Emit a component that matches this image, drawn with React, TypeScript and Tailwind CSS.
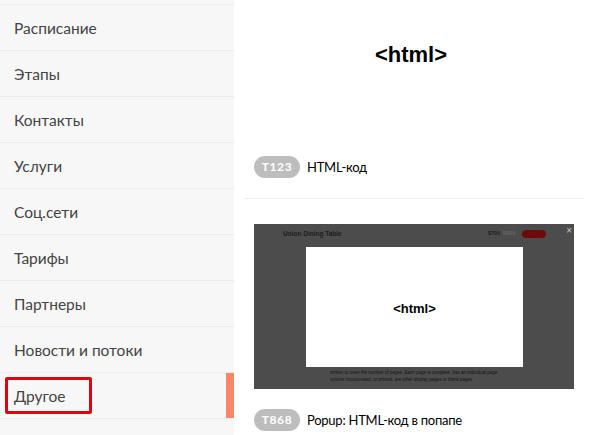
const menuItems = ['Расписание', 'Этапы', 'Контакты', 'Услуги', 'Соц.сети', 'Тарифы', 'Партнеры', 'Новости и потоки'];

function MenuRow({ label }: Readonly<{ label: string }>) {
  return (
    <div className="h-[46px] flex items-center pl-[14px] pt-[2px] border-b border-[#ececec] text-[15.5px] text-[#444444]">
      {label}
    </div>
  );
}

function TileCaption({ code, title }: Readonly<{ code: string; title: string }>) {
  return (
    <div className="flex items-center gap-[7px] h-[22px]">
      <span className="w-[46px] h-[22px] rounded-full bg-[#bdbdbd] text-white text-[12px] font-bold tracking-[0.6px] flex items-center justify-center">
        {code}
      </span>
      <span className="pt-[2px] text-[13px] tracking-[-0.25px] text-black">{title}</span>
    </div>
  );
}

function PopupPreview() {
  return (
    <div className="relative w-[320px] h-[165px] bg-[#4c4c4c] overflow-hidden" style={{ fontFamily: '"Liberation Sans", sans-serif' }}>
      <div className="flex items-center h-[23px] pb-[4px] pl-[29px] pr-[28px] text-[5.5px] font-bold text-[#1c1c1c]">
        <span className="flex-1 text-[6.5px]">Union Dining Table</span>
        <span className="w-[15px]">$700</span>
        <span className="w-[19px] text-[#666666]">$900</span>
        <span className="w-[24px] h-[8px] rounded-full bg-[#6e0a0c]" />
      </div>
      <span className="absolute top-[2px] right-[2px] text-[10px] leading-none text-[#c8c8c8]">×</span>
      <div className="ml-[52px] w-[217px] h-[120px] pt-[3px] bg-white flex items-center justify-center text-[13px] font-bold text-black">
        &lt;html&gt;
      </div>
      <div className="ml-[76px] mt-[2px] text-[4.5px] leading-[7px] text-[#141414] whitespace-nowrap">
        <div>written to meet the number of pages. Each page is complete, has an individual page</div>
        <div>volume incorporated, or printed, are other display pages or blank pages</div>
      </div>
    </div>
  );
}

export default function App() {
  return (
    <div className="flex w-[595px] h-[435px] overflow-hidden bg-white" style={{ fontFamily: 'Lato, "Noto Sans", sans-serif' }}>
      <aside className="w-[234px] shrink-0 bg-[#f7f7f7]">
        <div className="h-[5px] border-b border-[#ececec]" />
        {menuItems.map((item) => (
          <MenuRow key={item} label={item} />
        ))}
        <div className="relative h-[46px] flex items-center pl-[14px] pt-[2px] border-b border-[#ececec] text-[15.5px] text-[#444444]">
          Другое
          <span className="absolute left-[5px] top-[4px] w-[87px] h-[37px] border-[3px] border-[#e3000f] rounded-[2px]" />
          <span className="absolute right-0 top-0 w-[8px] h-[45px] bg-[#fa8669]" />
        </div>
      </aside>
      <main className="w-[340px] ml-[10px] shrink-0">
        <div className="h-[156px] pt-[43px] pr-[6px] flex justify-center text-[22px] leading-[24px] font-bold text-black" style={{ fontFamily: '"Liberation Sans", sans-serif' }}>
          &lt;html&gt;
        </div>
        <div className="pl-[10px] pb-[20px] border-b border-[#eeeeee]">
          <TileCaption code="T123" title="HTML-код" />
        </div>
        <div className="pl-[10px] pt-[25px]">
          <PopupPreview />
          <div className="mt-[20px]">
            <TileCaption code="T868" title="Popup: HTML-код в попапе" />
          </div>
        </div>
      </main>
    </div>
  );
}
